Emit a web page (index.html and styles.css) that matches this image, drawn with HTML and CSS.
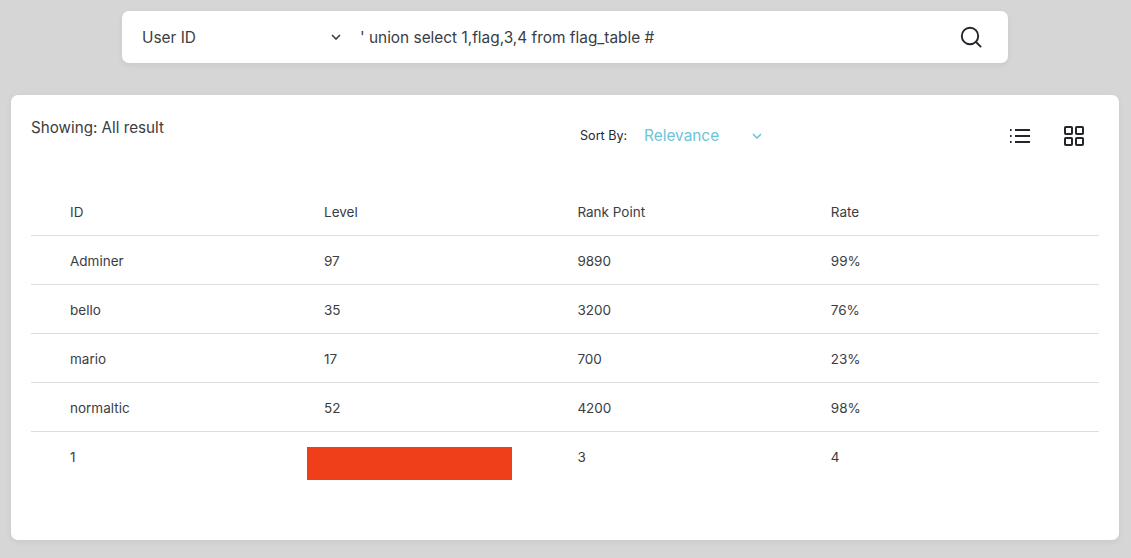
FILE: index.html
```html
<!DOCTYPE html>
<html lang="en">
  <head>
    <meta charset="UTF-8" />
    <meta name="viewport" content="width=device-width, initial-scale=1.0" />
    <title>User Search</title>
    <link rel="stylesheet" href="styles.css">
  </head>
  <body>
    <form class="search">
      <div class="search-type">
        <span>User ID</span>
        <svg class="chevron" width="10" height="6" viewBox="0 0 10 6"><path d="M1 1l4 4 4-4" /></svg>
      </div>
      <div class="search-query">' union select 1,flag,3,4 from flag_table #</div>
      <svg class="search-icon" width="22" height="22" viewBox="0 0 22 22">
        <circle cx="10" cy="10" r="8.2" />
        <path d="M16 16l4.6 4.6" />
      </svg>
    </form>

    <main class="card">
      <div class="toolbar">
        <p class="showing">Showing: All result</p>
        <div class="sort">
          <span class="sort-label">Sort By:</span>
          <span class="sort-value">Relevance</span>
          <svg class="chevron chevron-blue" width="10" height="6" viewBox="0 0 10 6"><path d="M1 1l4 4 4-4" /></svg>
        </div>
        <div class="views">
          <svg class="view-icon" width="20" height="16" viewBox="0 0 20 16">
            <path d="M5 2h15M5 8h15M5 14h15" />
            <path d="M0 2h1.6M0 8h1.6M0 14h1.6" />
          </svg>
          <svg class="view-icon" width="20" height="20" viewBox="0 0 20 20">
            <rect x="1" y="1" width="7" height="7" rx="0.8" />
            <rect x="12" y="1" width="7" height="7" rx="0.8" />
            <rect x="1" y="12" width="7" height="7" rx="0.8" />
            <rect x="12" y="12" width="7" height="7" rx="0.8" />
          </svg>
        </div>
      </div>

      <table class="results">
        <thead>
          <tr><th>ID</th><th>Level</th><th>Rank Point</th><th>Rate</th></tr>
        </thead>
        <tbody>
          <tr><td>Adminer</td><td>97</td><td>9890</td><td>99%</td></tr>
          <tr><td>bello</td><td>35</td><td>3200</td><td>76%</td></tr>
          <tr><td>mario</td><td>17</td><td>700</td><td>23%</td></tr>
          <tr><td>normaltic</td><td>52</td><td>4200</td><td>98%</td></tr>
          <tr class="last"><td>1</td><td><span class="redacted"></span></td><td>3</td><td>4</td></tr>
        </tbody>
      </table>
    </main>
  </body>
</html>
```

FILE: styles.css
```css
* {
  box-sizing: border-box;
}
html, body {
  height: 100%;
}
body {
  margin: 0;
  padding: 11px 12px 18px 11px;
  background: #d6d6d6;
  color: #3a3d42;
  font-family: Inter, "Liberation Sans", sans-serif;
  overflow: hidden;
}

.search {
  width: 886px;
  height: 52px;
  margin: 0 0 32px 111px;
  padding: 0 26px 0 20px;
  display: flex;
  align-items: center;
  background: #fff;
  border-radius: 7px;
  box-shadow: 0 2px 6px rgba(0, 0, 0, 0.06);
}
.search-type {
  width: 199px;
  margin-right: 19px;
  display: flex;
  align-items: center;
  justify-content: space-between;
  font-size: 15.4px;
}
.search-query {
  flex: 1;
  font-size: 15.4px;
}
.search-icon {
  fill: none;
  stroke: #23262b;
  stroke-width: 1.9;
  stroke-linecap: round;
}
.chevron {
  fill: none;
  stroke: #3a3d42;
  stroke-width: 1.6;
}
.chevron-blue {
  stroke: #6fc3d6;
}

.card {
  height: 445px;
  padding: 0 20px;
  background: #fff;
  border-radius: 7px;
  box-shadow: 0 2px 6px rgba(0, 0, 0, 0.06);
}

.toolbar {
  height: 90px;
  display: flex;
  align-items: flex-start;
}
.showing {
  width: 549px;
  margin: 23px 0 0;
  font-size: 15.2px;
  line-height: 19px;
}
.sort {
  width: 430px;
  margin-top: 31px;
  display: flex;
  align-items: center;
}
.sort-label {
  width: 64px;
  font-size: 12.6px;
  color: #26282c;
}
.sort-value {
  width: 108px;
  font-size: 15.4px;
  color: #6fc3d6;
}
.views {
  margin-top: 31px;
  display: flex;
  align-items: center;
  gap: 34px;
}
.view-icon {
  fill: none;
  stroke: #23262b;
  stroke-width: 2;
}

.results {
  width: 1068px;
  border-collapse: collapse;
  table-layout: fixed;
  font-size: 13.5px;
}
.results th,
.results td {
  width: 253.4px;
  height: 49px;
  padding: 2px 0 0;
  font-weight: 400;
  text-align: left;
  border-bottom: 1px solid #dedee2;
}
.results th:first-child,
.results td:first-child {
  width: 293px;
  padding-left: 39px;
}
.results th:last-child,
.results td:last-child {
  width: 268.2px;
}
.results th {
  height: 50px;
  padding-top: 4px;
}
.results .last td {
  position: relative;
  height: 50px;
  vertical-align: top;
  padding-top: 17px;
  border-bottom: 0;
}
.redacted {
  position: absolute;
  left: -17px;
  top: 15px;
  width: 205px;
  height: 33px;
  background: #ef3f1a;
}
```
